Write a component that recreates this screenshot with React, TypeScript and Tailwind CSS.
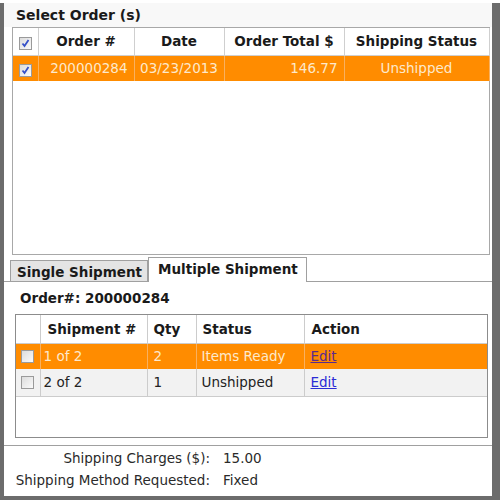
import React from "react";

function Check({ checked }: { checked: boolean }) {
  return (
    <span className="inline-flex w-[13px] h-[13px] border border-[#9a9a9a] bg-gradient-to-br from-[#dcdcdc] to-[#fafafa] items-center justify-center align-middle">
      {checked && (
        <svg width="11" height="11" viewBox="0 0 11 11">
          <path d="M2.5 5.5 L4.5 8 L8.5 2" fill="none" stroke="#3550c8" strokeWidth="1.8" />
        </svg>
      )}
    </span>
  );
}

export default function App() {
  return (
    <div className="w-[500px] h-[500px] bg-[#6c6c6c] font-['DejaVu_Sans',sans-serif] text-[13.5px] text-[#222]">
      <div className="ml-[4px] mt-[3px] w-[488px] h-[493px] bg-white flex flex-col">
        {/* title */}
        <div className="h-[24px] pt-[4px] pl-[12px] text-[14px] leading-[17px] font-bold text-[#1a1a1a] bg-[#f8f8f8]">
          Select Order (s)
        </div>
        {/* upper grid */}
        <div className="ml-[8px] w-[478px] h-[228px] border border-[#a8a8a8] bg-white">
          <table className="border-collapse table-fixed w-[476px]">
            <colgroup>
              <col className="w-[25px]" />
              <col className="w-[96px]" />
              <col className="w-[90px]" />
              <col className="w-[120px]" />
              <col className="w-[145px]" />
            </colgroup>
            <thead>
              <tr className="h-[27px] font-bold text-[#1a1a1a]">
                <th className="border-r border-b border-[#cfcfcf] text-center">
                  <span className="relative top-[1px]"><Check checked /></span>
                </th>
                <th className="border-r border-b border-[#cfcfcf] text-center">Order #</th>
                <th className="border-r border-b border-[#cfcfcf] text-center">Date</th>
                <th className="border-r border-b border-[#cfcfcf] text-center">Order Total $</th>
                <th className="border-r border-b border-[#cfcfcf] text-center">Shipping Status</th>
              </tr>
            </thead>
            <tbody>
              <tr className="h-[26px] bg-[#ff8c00] text-[#fde9cc]">
                <td className="border-r border-[#f8b060] text-center">
                  <span className="relative top-[1px]"><Check checked /></span>
                </td>
                <td className="border-r border-[#f8b060] text-right pr-[6px]">200000284</td>
                <td className="border-r border-[#f8b060] text-center">03/23/2013</td>
                <td className="border-r border-[#f8b060] text-right pr-[6px]">146.77</td>
                <td className="border-r border-[#f8b060] text-center">Unshipped</td>
              </tr>
            </tbody>
          </table>
        </div>
        {/* tabs */}
        <div className="h-[27px] flex items-end border-b border-[#a0a0a0] pl-[6px]">
          <div className="w-[138px] h-[21px] bg-[#e4e4e4] border border-b-0 border-[#a0a0a0] pl-[6px] pt-[3px] font-bold leading-[16px] text-[#1a1a1a] whitespace-nowrap">
            Single Shipment
          </div>
          <div className="w-[159px] h-[25px] -mb-px bg-white border border-b-0 border-[#a0a0a0] pl-[9px] pt-[3px] font-bold leading-[16px] text-[#1a1a1a] whitespace-nowrap">
            Multiple Shipment
          </div>
        </div>
        {/* order number */}
        <div className="h-[32px] pl-[16px] pt-[8px] font-bold leading-[16px] text-[#1a1a1a]">
          Order#: 200000284
        </div>
        {/* lower grid */}
        <div className="ml-[11px] w-[473px] h-[124px] border border-[#8c8c8c] bg-white">
          <table className="border-collapse table-fixed w-[471px]">
            <colgroup>
              <col className="w-[24px]" />
              <col className="w-[107px]" />
              <col className="w-[49px]" />
              <col className="w-[108px]" />
              <col className="w-[183px]" />
            </colgroup>
            <thead>
              <tr className="h-[28px] font-bold text-[#1a1a1a] text-left">
                <th className="border-r border-b border-[#cccccc]"></th>
                <th className="border-r border-b border-[#cccccc] pl-[7px]">Shipment #</th>
                <th className="border-r border-b border-[#cccccc] pl-[6px]">Qty</th>
                <th className="border-r border-b border-[#cccccc] pl-[6px]">Status</th>
                <th className="border-b border-[#cccccc] pl-[7px]">Action</th>
              </tr>
            </thead>
            <tbody>
              <tr className="h-[26px] bg-[#ff8c00] text-[#fde9cc]">
                <td className="border-r border-[#f8b060] text-center">
                  <span className="relative -top-[1px]"><Check checked={false} /></span>
                </td>
                <td className="border-r border-[#f8b060] pl-[3px]">1 of 2</td>
                <td className="border-r border-[#f8b060] pl-[6px]">2</td>
                <td className="border-r border-[#f8b060] pl-[5px]">Items Ready</td>
                <td className="pl-[6px]">
                  <a href="#" className="underline text-[#5a2a8e]">Edit</a>
                </td>
              </tr>
              <tr className="h-[27px] bg-[#f2f2f2] text-[#222] border-b border-[#cccccc]">
                <td className="border-r border-[#cccccc] text-center">
                  <span className="relative -top-[1px]"><Check checked={false} /></span>
                </td>
                <td className="border-r border-[#cccccc] pl-[3px]">2 of 2</td>
                <td className="border-r border-[#cccccc] pl-[6px]">1</td>
                <td className="border-r border-[#cccccc] pl-[5px]">Unshipped</td>
                <td className="pl-[6px]">
                  <a href="#" className="underline text-[#2b2bd6]">Edit</a>
                </td>
              </tr>
            </tbody>
          </table>
        </div>
        {/* footer */}
        <div className="mt-[7px] border-t border-[#a0a0a0] pt-[1px]">
          <div className="grid grid-cols-[206px_1fr] gap-x-[13px] text-[#2a2a2a]">
            <div className="h-[22px] leading-[22px] text-right">Shipping Charges ($):</div>
            <div className="h-[22px] leading-[22px]">15.00</div>
            <div className="h-[22px] leading-[22px] text-right">Shipping Method Requested:</div>
            <div className="h-[22px] leading-[22px]">Fixed</div>
          </div>
        </div>
      </div>
    </div>
  );
}
